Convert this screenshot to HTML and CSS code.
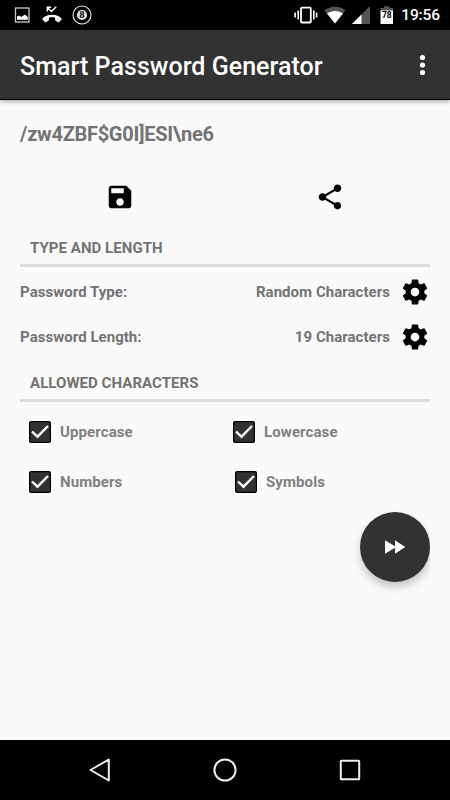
FILE: index.html
```
<!DOCTYPE html>
<html lang="en">
<head>
    <meta charset="UTF-8">
    <meta name="viewport" content="width=device-width, initial-scale=1.0">
    <title>Smart Password Generator</title>
    <link rel="stylesheet" href="styles.css">
</head>
<body>

<div class="status-bar">
    <div class="status-left">
        <svg width="16" height="16" viewBox="0 0 16 16"><rect x="1.500" y="1" width="13.5" height="14" fill="none" stroke="#c8c8c8" stroke-width="1.3"/><path d="M3 12.8V9.5l2.2-1 2 1.5 3.800-2.500 2.800 2.500v2.8z" fill="#fff"/></svg>
        <svg class="missed" width="20" height="18" viewBox="0 0 20 18"><path d="M5.3 5.5V1.2h3.8M5.3 1.5l4.2 4 4.7-4.7" fill="none" stroke="#fff" stroke-width="1.4"/><path d="M10 8.7C5.600 8.700 2.700 10 .7 12.200c-.5.6-.4 1 0 1.500l2.200 2.200c.5.4 1 .5 1.500.1l1.900-1.300c.5-.3.6-.6.6-1.200v-1.700c2-.6 4.200-.6 6.200 0v1.700c0 .6.1.9.6 1.200l1.900 1.300c.5.4 1 .3 1.500-.1l2.200-2.200c.4-.5.5-.9 0-1.500C17.300 10 14.400 8.700 10 8.700z" fill="#fff"/></svg>
        <svg class="ball" width="20" height="20" viewBox="0 0 20 20"><circle cx="10" cy="10" r="9" fill="none" stroke="#e8e8e8" stroke-width="1.1"/><circle cx="10" cy="10" r="5.100" fill="#e0e0e0"/><text x="10" y="13.300" text-anchor="middle" class="ball-number">8</text></svg>
    </div>
    <div class="status-right">
        <svg width="24" height="18" viewBox="0 0 24 18"><rect x="7" y="1.700" width="9.800" height="14.800" rx="1" fill="none" stroke="#fff" stroke-width="1.800"/><path d="M4.200 4.500v9M1.100 6.500v5M19.800 4.500v9M22.600 6.500v5" stroke="#fff" stroke-width="1.600"/></svg>
        <svg class="wifi" width="22" height="18" viewBox="0 0 22 18"><path d="M11 17.500L.5 4.300C6.500-.4 15.500-.4 21.500 4.300z" fill="#555"/><path d="M11 17.500L3 7.500c4.700-3.500 11.300-3.500 16 0z" fill="#fff"/></svg>
        <svg class="signal" width="18" height="18" viewBox="0 0 18 18"><path d="M0 18L18 0v18z" fill="#555"/><path d="M0 18l9.500-9.500V18z" fill="#fff"/></svg>
        <svg class="battery" width="14" height="18" viewBox="0 0 14 18"><path d="M.5 2H4V.2h5.500V2H13v4H.5z" fill="#555"/><path d="M.5 4.500H13V18H.5z" fill="#fff"/><text x="6.800" y="11.700" text-anchor="middle" class="battery-level">78</text></svg>
        <span class="clock">19:56</span>
    </div>
</div>

<header class="toolbar">
    <h1>Smart Password Generator</h1>
    <svg class="menu" width="8" height="22" viewBox="0 0 8 22"><circle cx="3.500" cy="3.500" r="2.600"/><circle cx="3.500" cy="11" r="2.600"/><circle cx="3.500" cy="18.500" r="2.600"/></svg>
</header>

<main class="content">
    <div class="password">/zw4ZBF$G0I]ESI\ne6</div>

    <div class="actions">
        <svg class="icon" viewBox="0 0 24 24"><path d="M17 3H5c-1.110 0-2 .9-2 2v14c0 1.100.89 2 2 2h14c1.100 0 2-.9 2-2V7l-4-4zm-5 16c-1.660 0-3-1.340-3-3s1.340-3 3-3 3 1.340 3 3-1.340 3-3 3zm3-10H5V5h10v4z"/></svg>
        <svg class="icon" viewBox="0 0 24 24"><path d="M18 16.080c-.76 0-1.440.3-1.960.77L8.910 12.700c.05-.23.09-.46.09-.7s-.04-.47-.09-.7l7.050-4.110c.54.5 1.250.81 2.040.81 1.660 0 3-1.340 3-3s-1.340-3-3-3-3 1.340-3 3c0 .24.04.47.09.7L8.040 9.810C7.500 9.310 6.790 9 6 9c-1.660 0-3 1.340-3 3s1.340 3 3 3c.79 0 1.500-.31 2.040-.81l7.120 4.160c-.05.21-.08.43-.08.65 0 1.610 1.310 2.920 2.920 2.920s2.920-1.310 2.920-2.920-1.310-2.920-2.920-2.920z"/></svg>
    </div>

    <h2>TYPE AND LENGTH</h2>
    <div class="rows">
        <div class="row">
            <span class="label">Password Type:</span>
            <span>Random Characters</span>
            <svg class="icon" viewBox="0 0 24 24"><path d="M19.430 12.980c.04-.32.07-.64.07-.98s-.03-.66-.07-.98l2.110-1.650c.19-.15.24-.42.12-.64l-2-3.460c-.12-.22-.39-.3-.61-.22l-2.490 1c-.52-.4-1.080-.73-1.690-.98l-.38-2.650C14.460 2.180 14.250 2 14 2h-4c-.25 0-.46.18-.49.42l-.38 2.650c-.61.25-1.170.59-1.690.98l-2.490-1c-.23-.09-.49 0-.61.22l-2 3.460c-.13.22-.07.49.12.64l2.110 1.650c-.04.32-.07.65-.07.98s.03.66.07.98l-2.110 1.650c-.19.15-.24.42-.12.64l2 3.460c.12.22.39.3.61.22l2.490-1c.52.4 1.080.73 1.690.98l.38 2.650c.03.24.24.42.49.42h4c.25 0 .46-.18.49-.42l.38-2.650c.61-.25 1.170-.59 1.690-.98l2.490 1c.23.09.49 0 .61-.22l2-3.460c.12-.22.07-.49-.12-.64l-2.110-1.650zM12 15.500c-1.930 0-3.500-1.570-3.500-3.500s1.570-3.500 3.500-3.500 3.500 1.570 3.500 3.500-1.570 3.500-3.500 3.500z"/></svg>
        </div>
        <div class="row">
            <span class="label">Password Length:</span>
            <span>19 Characters</span>
            <svg class="icon" viewBox="0 0 24 24"><path d="M19.430 12.980c.04-.32.07-.64.07-.98s-.03-.66-.07-.98l2.110-1.650c.19-.15.24-.42.12-.64l-2-3.460c-.12-.22-.39-.3-.61-.22l-2.490 1c-.52-.4-1.080-.73-1.690-.98l-.38-2.650C14.460 2.180 14.250 2 14 2h-4c-.25 0-.46.18-.49.42l-.38 2.650c-.61.25-1.170.59-1.690.98l-2.490-1c-.23-.09-.49 0-.61.22l-2 3.460c-.13.22-.07.49.12.64l2.110 1.650c-.04.32-.07.65-.07.98s.03.66.07.98l-2.110 1.650c-.19.15-.24.42-.12.64l2 3.460c.12.22.39.3.61.22l2.490-1c.52.4 1.080.73 1.690.98l.38 2.650c.03.24.24.42.49.42h4c.25 0 .46-.18.49-.42l.38-2.650c.61-.25 1.170-.59 1.690-.98l2.490 1c.23.09.49 0 .61-.22l2-3.460c.12-.22.07-.49-.12-.64l-2.110-1.650zM12 15.500c-1.930 0-3.500-1.570-3.500-3.500s1.570-3.500 3.500-3.500 3.500 1.570 3.500 3.500-1.570 3.500-3.500 3.500z"/></svg>
        </div>
    </div>

    <h2>ALLOWED CHARACTERS</h2>
    <div class="checks">
        <div class="check">
            <svg class="box" viewBox="0 0 22 22"><rect x=".6" y=".6" width="20.800" height="20.800" rx="1.500"/><path d="M3 10.500l5.500 5.200L19 5"/></svg>
            <span>Uppercase</span>
        </div>
        <div class="check">
            <svg class="box" viewBox="0 0 22 22"><rect x=".6" y=".6" width="20.800" height="20.800" rx="1.500"/><path d="M3 10.500l5.500 5.200L19 5"/></svg>
            <span>Lowercase</span>
        </div>
        <div class="check">
            <svg class="box" viewBox="0 0 22 22"><rect x=".6" y=".6" width="20.800" height="20.800" rx="1.500"/><path d="M3 10.500l5.500 5.200L19 5"/></svg>
            <span>Numbers</span>
        </div>
        <div class="check symbols">
            <svg class="box" viewBox="0 0 22 22"><rect x=".6" y=".6" width="20.800" height="20.800" rx="1.500"/><path d="M3 10.500l5.500 5.200L19 5"/></svg>
            <span>Symbols</span>
        </div>
    </div>

    <div class="fab-row">
        <div class="fab">
            <svg viewBox="0 0 24 24"><path d="M3.500 17.700l8.500-5.100v5.100L20.800 12 12 6.300v5.100L3.500 6.300z"/></svg>
        </div>
    </div>
</main>

<nav class="nav-bar">
    <svg viewBox="0 0 24 24"><path d="M20.800 1.500v21L2.500 12z"/></svg>
    <svg viewBox="0 0 24 24"><circle cx="12" cy="12" r="10.600"/></svg>
    <svg viewBox="0 0 24 24"><rect x="2.800" y="2.800" width="18.400" height="18.400" rx=".5"/></svg>
</nav>

</body>
</html>
```
FILE: styles.css
```
* {
    box-sizing: border-box;
}
body {
    margin: 0;
    width: 450px;
    height: 800px;
    display: flex;
    flex-direction: column;
    font-family: Roboto, sans-serif;
    background-color: #fafafa;
    color: #737373;
    overflow: hidden;
}
svg {
    display: block;
    flex: none;
}
.status-bar {
    height: 30px;
    padding: 0 10px 0 14px;
    display: flex;
    justify-content: space-between;
    background: #000;
    color: #fff;
}
.status-left, .status-right {
    display: flex;
    align-items: center;
}
.missed {
    margin-left: 12px;
}
.ball {
    margin-left: 10px;
}
.ball-number {
    font-family: "Liberation Serif", serif;
    font-size: 10px;
    font-weight: bold;
}
.wifi {
    margin-left: 6px;
}
.signal {
    margin-left: 6px;
}
.battery {
    margin-left: 10px;
}
.battery-level {
    font-size: 8.5px;
    font-weight: bold;
}
.clock {
    margin-left: 7px;
    font-size: 15.5px;
    font-weight: 500;
    letter-spacing: -0.1px;
}
.toolbar {
    height: 70px;
    padding: 4px 23px 0 20px;
    display: flex;
    align-items: center;
    justify-content: space-between;
    background: #323232;
    color: #fff;
    border-bottom: 1px solid #000;
    box-shadow: 0 1px 5px rgba(0, 0, 0, 0.4);
}
h1 {
    margin: 0;
    font-size: 25px;
    font-weight: 500;
    letter-spacing: 0.04px;
}
.menu {
    fill: #fff;
    margin-top: -4px;
}
.content {
    flex: 1;
    padding: 20px 20px 0;
    font-size: 15px;
    font-weight: bold;
}
.password {
    height: 27px;
    line-height: 29px;
    font-size: 20px;
    letter-spacing: -0.28px;
}
.actions {
    height: 80px;
    padding: 35px 85px 0;
    display: flex;
    justify-content: space-between;
}
.icon {
    width: 30px;
    height: 30px;
}
h2 {
    margin: 0;
    height: 40px;
    padding: 11px 10px 0;
    font-size: 15px;
    line-height: 20px;
    letter-spacing: 0.05px;
    border-bottom: 3px solid #dcdcdc;
}
.rows {
    padding: 2px 0 3px;
}
.row {
    height: 45px;
    display: flex;
    align-items: center;
    letter-spacing: 0.04px;
}
.row .label {
    flex: 1;
}
.row .icon {
    margin-left: 10px;
}
.checks {
    display: grid;
    grid-template-columns: 204px 1fr;
    grid-auto-rows: 50px;
    padding: 5px 0 0 9px;
    color: #808080;
    letter-spacing: 0.1px;
}
.check {
    display: flex;
    align-items: center;
    gap: 9px;
}
.symbols {
    padding-left: 2px;
}
.box {
    width: 22px;
    height: 22px;
}
.box rect {
    fill: #323232;
    stroke: #000;
    stroke-width: 1.2;
}
.box path {
    fill: none;
    stroke: #fff;
    stroke-width: 2.4;
}
/* shadow is cut off at the right edge of the content */
.fab-row {
    display: flex;
    justify-content: flex-end;
    padding-top: 5px;
    clip-path: inset(0 0 -30px 0);
}
.fab {
    width: 70px;
    height: 70px;
    display: flex;
    align-items: center;
    justify-content: center;
    border-radius: 50%;
    background: #323232;
    box-shadow: 0 5px 9px rgba(0, 0, 0, 0.22);
}
.fab svg {
    width: 28px;
    height: 28px;
    fill: #fff;
}
.nav-bar {
    height: 60px;
    padding: 0 88px;
    display: flex;
    align-items: center;
    justify-content: space-between;
    background: #000;
}
.nav-bar svg {
    width: 24px;
    height: 24px;
    fill: none;
    stroke: #eee;
    stroke-width: 2;
    stroke-linejoin: round;
}
```
